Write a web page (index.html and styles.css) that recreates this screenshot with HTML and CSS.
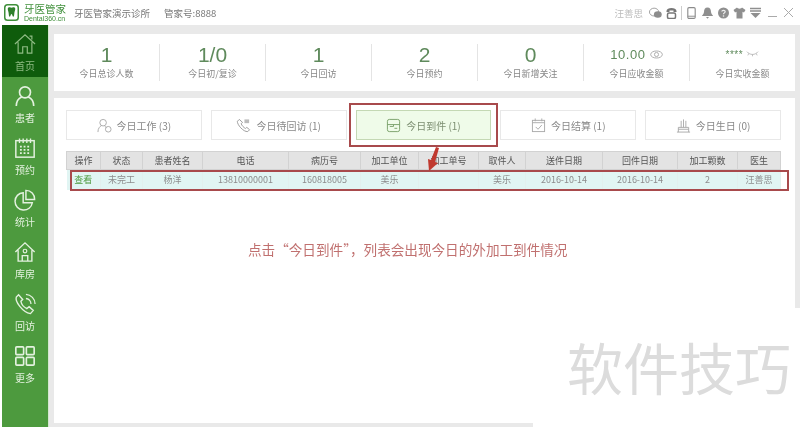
FILE: index.html
```html
<!DOCTYPE html>
<html lang="zh-CN">
<head>
  <meta charset="UTF-8">
  <title>牙医管家</title>
  <link rel="stylesheet" href="styles.css">
</head>
<body>
  <div class="app">
    <header class="topbar">
      <div class="logo">
        <svg class="logo-mark" viewBox="0 0 16 18"><rect x="0.8" y="0.8" width="14.4" height="16.4" rx="3" fill="none" stroke="#3f8f3a" stroke-width="1.6"/><path d="M4 5c0-1.4 1.2-1.9 2.2-1.6.7.2 1.2.4 1.8.4s1.100-.2 1.800-.4c1-.3 2.200.2 2.200 1.600 0 2-.9 3-1 5-.1 1.500-.3 3.500-1.200 3.500-.9 0-.7-3-1.800-3s-.9 3-1.800 3C5.300 13.500 5.100 11.500 5 10c-.1-2-1-3-1-5z" fill="#2f7f2c"/></svg>
        <div class="logo-text">
          <div class="logo-name">牙医管家</div>
          <div class="logo-url">Dental360.cn</div>
        </div>
      </div>
      <span class="clinic">牙医管家演示诊所</span>
      <span class="clinic-no">管家号:8888</span>
      <div class="top-right">
        <span class="user">汪善思</span>
        <svg class="ti" viewBox="0 0 14 12"><ellipse cx="5.500" cy="5" rx="5" ry="4.200" fill="none" stroke="#9a9a9a"/><ellipse cx="9.500" cy="7.500" rx="4.200" ry="3.500" fill="#8c8c8c"/></svg>
        <svg class="ti" viewBox="0 0 12 12"><path d="M1 4c0-4 10-4 10 0v1H8V3.500H4V5H1z" fill="#777"/><rect x="2" y="6" width="8" height="5.500" rx="1.500" fill="none" stroke="#777" stroke-width="1.500"/></svg>
        <span class="tsep"></span>
        <svg class="ti" viewBox="0 0 10 13"><rect x="1" y="0.700" width="8" height="11.600" rx="1.300" fill="none" stroke="#8a8a8a" stroke-width="1.200"/><path d="M1 10h8" stroke="#8a8a8a"/></svg>
        <svg class="ti" viewBox="0 0 12 12"><path d="M6 .5c2.500 0 3.500 2 3.500 4.500 0 2 2 3 2 4H.5c0-1 2-2 2-4C2.500 2.500 3.500.5 6 .5zM4.500 10h3L6 11.800z" fill="#8f8f8f"/></svg>
        <svg class="ti" viewBox="0 0 12 12"><circle cx="6" cy="6" r="5.500" fill="#8f8f8f"/><path d="M4.300 4.500C4.500 2.800 7.800 2.900 7.700 4.700 7.600 5.900 6 5.900 6 7.200" fill="none" stroke="#eee" stroke-width="1.200"/><circle cx="6" cy="9" r=".8" fill="#eee"/></svg>
        <svg class="ti" viewBox="0 0 13 12"><path d="M4 .5 0.500 3l1.500 2.500 1.500-.8V11.500h6V4.700l1.500.8L12.500 3 9 .5C8.500 2 4.500 2 4 .5z" fill="#8f8f8f"/></svg>
        <svg class="ti" viewBox="0 0 12 12"><path d="M.5 1.500h11M.5 4h11" stroke="#8f8f8f" stroke-width="1.400"/><path d="M1 6h10l-5 5z" fill="#8f8f8f"/></svg>
        <svg class="tw" viewBox="0 0 11 11"><path d="M1 9.500h9" stroke="#aaa"/></svg>
        <svg class="tw" viewBox="0 0 11 11"><path d="M1 1l9 9M10 1l-9 9" stroke="#aaa"/></svg>
      </div>
    </header>

    <div class="body">
      <nav class="sidebar">
        <a class="nav-item active">
          <svg viewBox="0 0 24 24"><path d="M1 12 12 2l11 10M4.500 10v12h5v-7h5v7h5V10M17 3.500h2.500V7" fill="none" stroke="currentColor" stroke-width="1.300"/></svg>
          <span>首页</span>
        </a>
        <a class="nav-item">
          <svg viewBox="0 0 24 24"><circle cx="12" cy="8" r="6" fill="none" stroke="currentColor" stroke-width="1.800"/><path d="M2.500 23c0-6 3.500-9 6-10M21.500 23c0-6-3.500-9-6-10" fill="none" stroke="currentColor" stroke-width="1.800"/></svg>
          <span>患者</span>
        </a>
        <a class="nav-item">
          <svg viewBox="0 0 24 24"><rect x="2" y="4" width="20" height="18" fill="none" stroke="currentColor" stroke-width="1.600"/><path d="M6 1.500v5M10 1.500v5M14 1.500v5M18 1.500v5" stroke="currentColor" stroke-width="1.500"/><path d="M6.500 10.500h11M6.500 14h11M6.500 17.500h11" stroke="currentColor" stroke-width="2" stroke-dasharray="2 2"/></svg>
          <span>预约</span>
        </a>
        <a class="nav-item">
          <svg viewBox="0 0 24 24"><path d="M10 4a9.500 9.500 0 1 0 10 11H10z" fill="none" stroke="currentColor" stroke-width="1.600"/><path d="M13 1.500a9.500 9.500 0 0 1 9.500 10H13z" fill="none" stroke="currentColor" stroke-width="1.600"/></svg>
          <span>统计</span>
        </a>
        <a class="nav-item">
          <svg viewBox="0 0 24 24"><path d="M1.500 12 12 2l10.500 10M4.500 10v12h15V10M9 22v-6h6v6" fill="none" stroke="currentColor" stroke-width="1.500"/><circle cx="12" cy="11" r="2" fill="none" stroke="currentColor" stroke-width="1.300"/></svg>
          <span>库房</span>
        </a>
        <a class="nav-item">
          <svg viewBox="0 0 24 24"><path d="M5 2 2.500 4.500C1 9 9 21 18 22.500l3-3.500-4.500-4-2.500 2C11 15.500 8 12 7.500 9L9.500 7z" fill="none" stroke="currentColor" stroke-width="1.500"/><path d="M13 6a6 6 0 0 1 5.500 6M13 1.500A10.500 10.500 0 0 1 23 12" fill="none" stroke="currentColor" stroke-width="1.400"/></svg>
          <span>回访</span>
        </a>
        <a class="nav-item">
          <svg viewBox="0 0 24 24"><rect x="2" y="2" width="8.500" height="8.500" rx="1" fill="none" stroke="currentColor" stroke-width="1.800"/><rect x="13.500" y="2" width="8.500" height="8.500" rx="1" fill="none" stroke="currentColor" stroke-width="1.800"/><rect x="2" y="13.500" width="8.500" height="8.500" rx="1" fill="none" stroke="currentColor" stroke-width="1.800"/><rect x="13.500" y="13.500" width="8.500" height="8.500" rx="1" fill="none" stroke="currentColor" stroke-width="1.800"/></svg>
          <span>更多</span>
        </a>
      </nav>

      <main class="content">
        <section class="stats">
          <div class="stat"><div class="stat-val">1</div><div class="stat-label">今日总诊人数</div></div>
          <div class="stat"><div class="stat-val">1/0</div><div class="stat-label">今日初/复诊</div></div>
          <div class="stat"><div class="stat-val">1</div><div class="stat-label">今日回访</div></div>
          <div class="stat"><div class="stat-val">2</div><div class="stat-label">今日预约</div></div>
          <div class="stat"><div class="stat-val">0</div><div class="stat-label">今日新增关注</div></div>
          <div class="stat">
            <div class="stat-val small">10.00
              <svg class="eye" viewBox="0 0 14 9"><ellipse cx="7" cy="4.500" rx="6.300" ry="3.800" fill="none" stroke="#aaa"/><circle cx="7" cy="4.500" r="2.200" fill="none" stroke="#aaa"/></svg>
            </div>
            <div class="stat-label">今日应收金额</div>
          </div>
          <div class="stat">
            <div class="stat-val stars">****
              <svg class="eye" viewBox="0 0 14 6"><path d="M1 1c3 4 9 4 12 0M3 3 2 5M7 4v2M11 3l1 2" fill="none" stroke="#aaa" stroke-width=".8"/></svg>
            </div>
            <div class="stat-label">今日实收金额</div>
          </div>
        </section>

        <section class="panel">
          <div class="tabs">
            <div class="tab">
              <svg viewBox="0 0 16 16"><circle cx="6.500" cy="5" r="3.500" fill="none" stroke="#aaa"/><path d="M1 15c0-4 2-6 4-7M8 8.500c1 .5 1.500 1 2 2" fill="none" stroke="#aaa"/><circle cx="12" cy="12" r="3" fill="none" stroke="#aaa"/></svg>
              今日工作 (3)
            </div>
            <div class="tab">
              <svg viewBox="0 0 16 16"><path d="M3.500 1.500 1.500 3.500C1 7 8 15 12.500 14.500l2-2-3-2.500-1.500 1.200C8.500 10.300 6 8 5.500 6L7 4.700z" fill="none" stroke="#999"/><path d="M9 1.500h5v4H9z" fill="#bbb"/></svg>
              今日待回访 (1)
            </div>
            <div class="tab on">
              <svg viewBox="0 0 16 16"><rect x="1.500" y="1.500" width="13" height="13" rx="2" fill="none" stroke="#7aa06a"/><path d="M1.500 7h13M8 7v2H4M9 11h3" fill="none" stroke="#7aa06a"/></svg>
              今日到件 (1)
            </div>
            <div class="tab">
              <svg viewBox="0 0 16 16"><rect x="1.500" y="2.500" width="13" height="12" fill="none" stroke="#aaa"/><path d="M4.500 .5v3M11.500 .5v3M1.500 5h13M5 9.500l2.500 2.500L11.500 7.500" fill="none" stroke="#aaa"/></svg>
              今日结算 (1)
            </div>
            <div class="tab">
              <svg viewBox="0 0 16 16"><path d="M1 15h14M2.500 15V10h11v5M2.500 12h11M5.500 10V3M8 10V1.500M10.500 10V3" fill="none" stroke="#aaa"/></svg>
              今日生日 (0)
            </div>
          </div>

          <table class="list">
            <colgroup>
              <col class="c-op"><col class="c-state"><col class="c-name"><col class="c-tel"><col class="c-no">
              <col class="c-lab"><col class="c-labno"><col class="c-taker"><col class="c-date"><col class="c-date2">
              <col class="c-count"><col>
            </colgroup>
            <thead>
              <tr>
                <th>操作</th><th>状态</th><th>患者姓名</th><th>电话</th><th>病历号</th><th>加工单位</th>
                <th>加工单号</th><th>取件人</th><th>送件日期</th><th>回件日期</th><th>加工颗数</th><th>医生</th>
              </tr>
            </thead>
            <tbody>
              <tr>
                <td class="link">查看</td><td>未完工</td><td>杨洋</td><td>13810000001</td><td>160818005</td><td>美乐</td>
                <td></td><td>美乐</td><td>2016-10-14</td><td>2016-10-14</td><td>2</td><td>汪善思</td>
              </tr>
            </tbody>
          </table>

          <p class="note">点击“今日到件”，列表会出现今日的外加工到件情况</p>
        </section>
      </main>
    </div>

    <!-- annotations on top of the screenshot -->
    <div class="mark mark-tab"></div>
    <div class="mark mark-row"></div>
    <svg class="arrow" viewBox="0 0 16 26"><path d="M13 1 9 15l3 1-9 8-1-12 3 1L10 0z" fill="#c0392f"/></svg>
    <div class="watermark">软件技巧</div>
  </div>
</body>
</html>
```

FILE: styles.css
```css
* { box-sizing: border-box; }
html, body { margin: 0; height: 100%; }
body {
  font-family: "Noto Sans CJK SC", "Liberation Sans", sans-serif;
  background-color: #fff;
  color: #666;
  overflow: hidden;
}
.app { position: relative; width: 800px; height: 427px; overflow: hidden; filter: blur(0.35px); }

.topbar { display: flex; align-items: center; height: 25px; padding: 0 6px 0 4px; background: #fff; }
.logo { display: flex; align-items: center; gap: 5px; width: 70px; }
.logo-mark { width: 15px; height: 17px; flex: none; }
.logo-name { height: 11px; font-size: 10.500px; line-height: 11px; color: #3f8f3a; white-space: nowrap; }
.logo-url { height: 7px; margin-top: 1px; font-size: 7px; line-height: 7px; font-family: "Liberation Sans", sans-serif; color: #3f8f3a; white-space: nowrap; }
.clinic { font-size: 9.500px; color: #777; }
.clinic-no { font-size: 9.500px; color: #777; margin-left: 14px; }
.top-right { display: flex; align-items: center; gap: 3px; margin-left: auto; }
.user { font-size: 9.500px; color: #bbb; margin-right: 3px; }
.ti { width: 13px; height: 12px; }
.tsep { width: 1px; height: 14px; background: #ccc; }
.tw { width: 11px; height: 11px; margin-left: 2px; }

.body { display: flex; height: 402px; background: #e9e9e9; }

.sidebar { width: 49px; padding-left: 2px; border-right: 1px solid #d5e6d0; background-color: #fff; flex: none; }
.nav-item {
  display: flex; flex-direction: column; align-items: center; justify-content: center; gap: 5px;
  height: 52px; padding-top: 2px; background-color: #4d9a3e; color: #e4f1df; font-size: 10px; line-height: 12px;
}
.nav-item svg { width: 22px; height: 22px; }
.nav-item.active { background-color: #0f5c0c; color: #8fbb84; }
.sidebar::after { content: ""; display: block; height: 38px; background-color: #4d9a3e; }

.content { flex: 1; padding: 9px 5px 4px 5px; display: flex; flex-direction: column; gap: 7px; }

.stats { display: flex; height: 57px; padding: 10px 0 10px; background: #fff; }
.stat { flex: 1; text-align: center; border-left: 1px solid #e4e4e4; }
.stat:first-child { border-left: none; }
.stat-val { height: 24px; font-family: "Liberation Sans", sans-serif; font-size: 21px; line-height: 22px; color: #5f8a5c; }
.stat-val.small { font-size: 13px; letter-spacing: 0.6px; }
.stat-val.stars { font-size: 10px; letter-spacing: 0.5px; }
.eye { width: 13px; height: 9px; }
.stat-label { font-size: 9px; line-height: 12px; color: #888; }

.panel { flex: 1; padding: 12px 14px 0 12px; background: #fff; }

.tabs { display: flex; justify-content: space-between; gap: 9px; }
.tab {
  display: flex; flex: 1; align-items: center; justify-content: center; gap: 5px;
  height: 30px; border: 1px solid #e8e8e8; background: #fff; color: #888; font-size: 10px;
}
.tab svg { width: 15px; height: 15px; }
.tab.on { background: #effbe9; border-color: #c4d8b4; color: #7d8f72; }

.list { width: 715px; margin-top: 11px; border-collapse: collapse; table-layout: fixed; font-size: 9px; text-align: center; }
.c-op { width: 34px; }
.c-state { width: 42px; }
.c-name { width: 60px; }
.c-tel { width: 86px; }
.c-no { width: 72px; }
.c-lab { width: 58px; }
.c-labno { width: 60px; }
.c-taker { width: 47px; }
.c-date { width: 77px; }
.c-date2 { width: 75px; }
.c-count { width: 60px; }
.list th {
  height: 18px; padding: 0; border: 1px solid #d2d2d2; background: #e3e3e3;
  color: #555; font-weight: normal;
}
.list td { height: 20px; padding: 0; border-right: 1px solid #e2f0ee; background: #e1f5f3; color: #8c8c8c; }
.list td.link { color: #4d9a3e; }

.note { margin: 50px 0 0 182px; font-size: 13.600px; line-height: 18px; color: #c0706f; white-space: nowrap; }

.mark { position: absolute; border: 2px solid #a84a4c; }
.mark-tab { left: 349px; top: 103px; width: 149px; height: 44px; }
.mark-row { left: 70px; top: 170px; width: 719px; height: 21px; }
.arrow { position: absolute; left: 426px; top: 147px; width: 16px; height: 26px; }

.watermark {
  position: absolute; right: 0; bottom: 0; width: 267px; height: 119px;
  padding: 17px 0 0 34px; background: #fff; color: #dcdcdc;
  font-size: 56px; line-height: 82px; white-space: nowrap;
}
```
